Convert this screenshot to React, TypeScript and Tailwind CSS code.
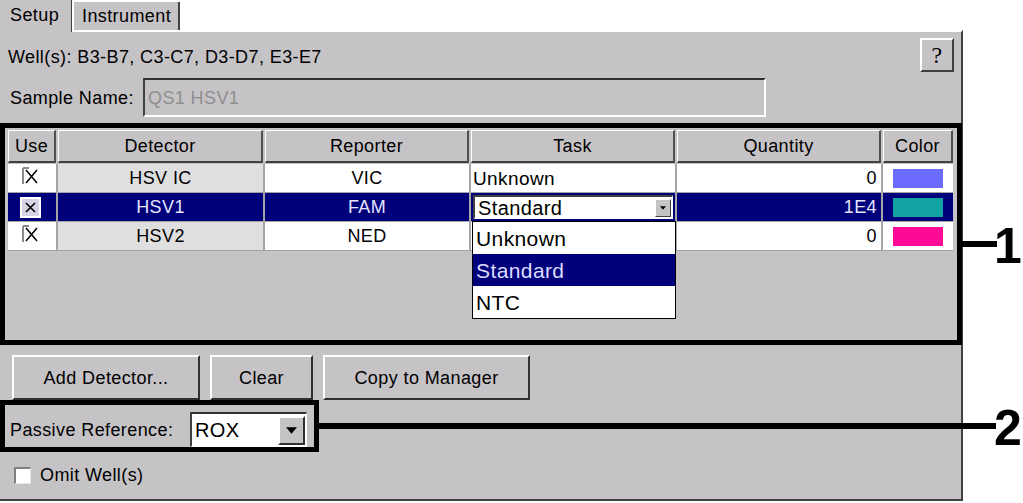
import React from "react";

function Tri({ w = 10 }: { w?: number }) {
  return (
    <svg width={w} height={Math.round(w * 0.6)} viewBox="0 0 10 6">
      <path d="M0 0H10L5 6Z" fill="#000" />
    </svg>
  );
}

function CheckFlat() {
  return (
    <svg width="18" height="18" viewBox="0 0 18 18">
      <path d="M1 1V17M1 1H7" stroke="#8a8a8a" strokeWidth="2" fill="none" />
      <path d="M4 3L15 16M15 3L4 16" stroke="#000" strokeWidth="1.5" />
    </svg>
  );
}

function CheckSel() {
  return (
    <svg width="21" height="21" viewBox="0 0 21 21">
      <rect x="1" y="1" width="19" height="19" fill="#d4d4e4" stroke="#ffffff" strokeWidth="2" />
      <path d="M6 6L15 15M15 6L6 15" stroke="#000" strokeWidth="1.6" />
    </svg>
  );
}

const rows = [
  { det: "HSV IC", rep: "VIC", task: "Unknown", qty: "0", color: "#6b6bff", sel: false },
  { det: "HSV1", rep: "FAM", task: "Standard", qty: "1E4", color: "#14a3a3", sel: true },
  { det: "HSV2", rep: "NED", task: "", qty: "0", color: "#ff0a96", sel: false },
];

const headers = ["Use", "Detector", "Reporter", "Task", "Quantity", "Color"];

export default function App() {
  return (
    <div className="relative w-[1023px] h-[503px] overflow-hidden bg-white font-['Liberation_Sans',Arial,sans-serif] text-[18px] tracking-[0.4px] text-black leading-none">
      <div className="w-[963px] flex flex-col">
        {/* Tabs */}
        <div className="relative z-10 flex h-[30px] items-end">
          <div className="w-[72px] h-[32px] -mb-[2px] bg-[#c6c3c6] border-r border-r-[#404040] pl-[10px] pt-[6px]">
            Setup
          </div>
          <div className="w-[108px] h-[28px] bg-[#c6c3c6] border-l-2 border-l-white border-r-2 border-r-[#404040] pl-[8px] pt-[5px]">
            Instrument
          </div>
        </div>

        {/* Panel */}
        <div className="h-[471px] bg-[#c6c3c6] border-t-2 border-t-white border-r-2 border-r-[#404040] border-b-2 border-b-[#404040] flex flex-col">
          {/* Wells row */}
          <div className="mt-[6px] h-[34px] flex items-center justify-between pl-[8px] pr-[7px]">
            <span className="pt-[4px]">Well(s): B3-B7, C3-C7, D3-D7, E3-E7</span>
            <div className="w-[34px] h-[34px] flex items-center justify-center bg-[#c6c3c6] border-t-2 border-l-2 border-t-white border-l-white border-b-2 border-r-2 border-b-[#404040] border-r-[#404040] font-['Liberation_Serif',serif] text-[24px]">
              ?
            </div>
          </div>

          {/* Sample name row */}
          <div className="mt-[6px] h-[39px] flex items-center pl-[10px]">
            <span className="w-[133px]">Sample Name:</span>
            <div className="w-[623px] h-full flex items-center pl-[3px] border-t-2 border-l-2 border-t-[#303030] border-l-[#404040] border-b-2 border-r-2 border-b-white border-r-white text-[#8e8e8e]">
              QS1 HSV1
            </div>
          </div>

          {/* Table */}
          <div className="relative mt-[13px] h-[215px] pl-[8px]">
            <div className="grid grid-cols-[48px_205px_204px_204px_204px_70px] gap-x-[2px]">
              {headers.map((h) => (
                <div
                  key={h}
                  className="h-[33px] flex items-center justify-center bg-[#c6c3c6] border-t border-l border-t-white border-l-white border-b-2 border-r-2 border-b-[#404040] border-r-[#505050]"
                >
                  {h}
                </div>
              ))}
            </div>
            <div className="mt-[1px] w-[945px] grid grid-cols-[48px_205px_204px_204px_204px_70px] gap-x-[2px] gap-y-[1px] bg-[#a4a4a4] border-b border-b-[#a4a4a4]">
              {rows.map((r) => (
                <React.Fragment key={r.det}>
                  <div className={r.sel ? "h-[28px] bg-[#00007b] flex items-center pl-[12px]" : "h-[28px] bg-white flex items-start pl-[14px] pt-[3px]"}>
                    {r.sel ? <CheckSel /> : <CheckFlat />}
                  </div>
                  <div className={r.sel ? "h-[28px] bg-[#00007b] text-[#e4e4ff] flex items-center justify-center" : "h-[28px] bg-[#e0dfe0] flex items-center justify-center"}>
                    {r.det}
                  </div>
                  <div className={r.sel ? "h-[28px] bg-[#00007b] text-[#e4e4ff] flex items-center justify-center" : "h-[28px] bg-white flex items-center justify-center"}>
                    {r.rep}
                  </div>
                  {r.sel ? (
                    <div className="h-[28px] bg-[#00007b] flex items-center px-[2px]">
                      <div className="w-full h-[24px] bg-white flex items-center justify-between border-t-2 border-l-2 border-t-[#404040] border-l-[#404040] border-b border-r border-b-white border-r-white">
                        <span className="pl-[3px] text-[20px]">Standard</span>
                        <div className="w-[16px] h-[18px] mr-[1px] flex items-center justify-center bg-[#c6c3c6] border-t border-l border-t-white border-l-white border-b border-r border-b-[#404040] border-r-[#404040]">
                          <Tri w={6} />
                        </div>
                      </div>
                    </div>
                  ) : (
                    <div className="h-[28px] bg-white flex items-center pl-[2px] text-[19px]">{r.task}</div>
                  )}
                  <div className={r.sel ? "h-[28px] bg-[#00007b] text-[#e4e4ff] flex items-center justify-end pr-[4px]" : "h-[28px] bg-white flex items-center justify-end pr-[4px]"}>
                    {r.qty}
                  </div>
                  <div className={r.sel ? "h-[28px] bg-[#00007b] flex items-center pl-[10px]" : "h-[28px] bg-white flex items-center pl-[10px]"}>
                    <div className="w-[50px] h-[19px]" style={{ backgroundColor: r.color }} />
                  </div>
                </React.Fragment>
              ))}
            </div>

            {/* Dropdown popup */}
            <div className="absolute left-[472px] top-[91px] z-20 w-[204px] h-[98px] bg-white border border-black flex flex-col text-[21px]">
              <div className="h-[32px] flex items-center pl-[3px]">Unknown</div>
              <div className="h-[32px] flex items-center pl-[3px] bg-[#00007b] text-[#dcdcff]">Standard</div>
              <div className="h-[32px] flex items-center pl-[3px]">NTC</div>
            </div>
          </div>

          {/* Buttons */}
          <div className="mt-[10px] h-[45px] flex gap-[10px] pl-[12px]">
            <div className="w-[188px] h-full flex items-center justify-center bg-[#c6c3c6] border-t-2 border-l-2 border-t-white border-l-white border-b-2 border-r-2 border-b-[#303030] border-r-[#303030]">
              Add Detector...
            </div>
            <div className="w-[103px] h-full flex items-center justify-center bg-[#c6c3c6] border-t-2 border-l-2 border-t-white border-l-white border-b-2 border-r-2 border-b-[#303030] border-r-[#303030]">
              Clear
            </div>
            <div className="w-[207px] h-full flex items-center justify-center bg-[#c6c3c6] border-t-2 border-l-2 border-t-white border-l-white border-b-2 border-r-2 border-b-[#303030] border-r-[#303030]">
              Copy to Manager
            </div>
          </div>

          {/* Passive reference */}
          <div className="mt-[12px] h-[35px] flex items-center pl-[10px]">
            <span className="w-[180px]">Passive Reference:</span>
            <div className="w-[117px] h-full bg-white flex items-center justify-between border-t-2 border-l-2 border-t-[#303030] border-l-[#404040] border-b border-r border-b-white border-r-white">
              <span className="pl-[3px] text-[20px]">ROX</span>
              <div className="w-[27px] h-[29px] mr-[1px] flex items-center justify-center bg-[#c6c3c6] border-t-2 border-l-2 border-t-white border-l-white border-b-2 border-r-2 border-b-[#303030] border-r-[#303030]">
                <Tri w={11} />
              </div>
            </div>
          </div>

          {/* Omit wells */}
          <div className="mt-[18px] h-[20px] flex items-center pl-[14px] gap-[9px]">
            <div className="w-[17px] h-[17px] bg-white border-t-2 border-l-2 border-t-[#808080] border-l-[#808080] border-b border-r border-b-[#e8e8e8] border-r-[#e8e8e8]" />
            <span>Omit Well(s)</span>
          </div>
        </div>
      </div>

      {/* Annotation overlays */}
      <div className="absolute left-0 top-[123px] w-[962px] h-[222px] border-[5px] border-black pointer-events-none" />
      <div className="absolute left-[961px] top-[241px] w-[36px] h-[6px] bg-black" />
      <div className="absolute left-[994px] top-[221px] font-bold text-[50px] leading-none tracking-normal">1</div>

      <div className="absolute left-0 top-[400px] w-[319px] h-[52px] border-[5px] border-black pointer-events-none" />
      <div className="absolute left-[318px] top-[423px] w-[678px] h-[6px] bg-black" />
      <div className="absolute left-[994px] top-[403px] font-bold text-[50px] leading-none tracking-normal">2</div>
    </div>
  );
}
